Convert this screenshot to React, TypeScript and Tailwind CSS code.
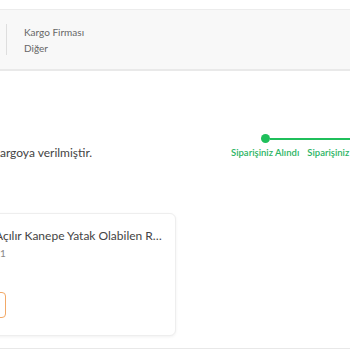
const steps = ['Siparişiniz Alındı', 'Siparişiniz Kargoya Verildi', 'Teslim Edildi'];

const Stepper = () => (
    <div className="flex">
        {steps.map((label, i) => (
            <div key={label} className="flex flex-col items-center">
                <div className="flex w-full items-center">
                    <div className={`h-[2px] flex-1 ${i === 0 ? 'bg-transparent' : 'bg-[#1fbf5b]'}`} />
                    <div className="h-[9px] w-[9px] shrink-0 rounded-full bg-[#1fbf5b]" />
                    <div className="h-[2px] flex-1 bg-[#1fbf5b]" />
                </div>
                <p className="mt-[3px] whitespace-nowrap px-[4px] text-[9.5px] leading-[14px] font-semibold text-[#2bb463]">{label}</p>
            </div>
        ))}
    </div>
);

const App = () => (
    <div className="h-[350px] w-[350px] overflow-hidden bg-white font-['Lato','Noto_Sans',sans-serif] text-[#333]">
        <div className="mt-[9px] flex h-[62px] items-center border-t border-b-2 border-[#ececec] border-b-[#e9e9e9] bg-[#f8f8f8]">
            <div className="ml-[6px] h-[31px] border-l border-[#dedede]" />
            <div className="pl-[17px] text-[10px] leading-[16px] text-[#666]">
                <p>Kargo Firması</p>
                <p>Diğer</p>
            </div>
        </div>

        <div className="mt-[63px] flex items-end justify-between">
            <p className="-ml-[8px] whitespace-nowrap text-[12px] leading-[14px] text-[#444]">Kargoya verilmiştir.</p>
            <div className="-mr-[197px] w-[320px] shrink-0">
                <Stepper />
            </div>
        </div>

        <div className="mt-[53px] -ml-[94px] w-[270px] rounded-md border border-[#eeeeee] bg-white pt-[14px] pr-[11px] pb-[17px] pl-[16px] shadow-[0_1px_3px_rgba(0,0,0,0.06)]">
            <div className="flex gap-[12px]">
                <div className="h-[56px] w-[60px] shrink-0 rounded bg-[#f3f3f3]" />
                <div className="min-w-0">
                    <p className="truncate text-[12px] leading-[16px] text-[#444]">Açılır Kanepe Yatak Olabilen Rahat Koltuk</p>
                    <p className="mt-[2px] text-[10px] leading-[14px] text-[#888]">x1</p>
                </div>
            </div>
            <button className="mt-[8px] h-[26px] w-[83px] rounded border border-[#f2a968] text-[10px] text-[#f08a30]">Değerlendir</button>
        </div>

        <div className="mt-[12px] border-t border-[#e8e8e8]" />
    </div>
);

export default App;
